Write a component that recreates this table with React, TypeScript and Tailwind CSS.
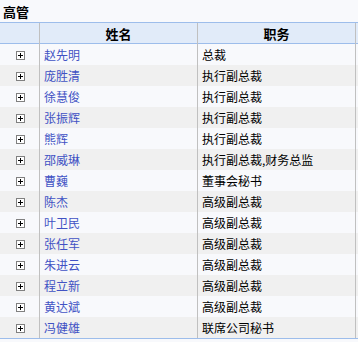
import React from 'react';

const rows: [string, string][] = [
  ['赵先明', '总裁'],
  ['庞胜清', '执行副总裁'],
  ['徐慧俊', '执行副总裁'],
  ['张振辉', '执行副总裁'],
  ['熊辉', '执行副总裁'],
  ['邵威琳', '执行副总裁,财务总监'],
  ['曹巍', '董事会秘书'],
  ['陈杰', '高级副总裁'],
  ['叶卫民', '高级副总裁'],
  ['张任军', '高级副总裁'],
  ['朱进云', '高级副总裁'],
  ['程立新', '高级副总裁'],
  ['黄达斌', '高级副总裁'],
  ['冯健雄', '联席公司秘书'],
];

function PlusBox() {
  return (
    <span className="relative block w-[9px] h-[9px] border border-[#808080] bg-white">
      <span className="absolute left-[1px] top-[3px] w-[5px] h-[1px] bg-black" />
      <span className="absolute left-[3px] top-[1px] w-[1px] h-[5px] bg-black" />
    </span>
  );
}

export default function App() {
  return (
    <div
      className="w-[358px] h-[342px] bg-[#f8f9fc] text-[12px] text-black overflow-hidden"
      style={{ fontFamily: '"Noto Sans CJK SC", "Liberation Sans", sans-serif' }}
    >
      <div className="h-[22px] pl-[3px] pt-[4px] text-[13px] font-bold leading-[16px]">高管</div>

      <div className="border-y border-[#9dbdeb]">
        {/* header */}
        <div className="grid grid-cols-[40px_158px_158px_2px] h-[21px] bg-[#e1ebf9] border-b border-[#9dbdeb] font-bold text-[13px] leading-[21px]">
          <div className="border-r border-[#c0c0c0]" />
          <div className="border-r border-[#c0c0c0] text-center">姓名</div>
          <div className="border-r border-[#c0c0c0] text-center">职务</div>
          <div />
        </div>

        {rows.map(([name, title], i) => (
          <div
            key={name}
            className={
              'grid grid-cols-[40px_158px_158px_2px] h-[21px] leading-[21px] ' +
              (i % 2 === 0 ? 'bg-[#f8f9fc]' : 'bg-[#f0f0f0]')
            }
          >
            <div className="border-r border-[#c0c0c0] flex items-center pl-[16px] pt-[1px]">
              <PlusBox />
            </div>
            <div className="border-r border-[#c0c0c0] pl-[4px] text-[#4152c4] whitespace-nowrap">{name}</div>
            <div className="border-r border-[#c0c0c0] pl-[4px] whitespace-nowrap">{title}</div>
            <div />
          </div>
        ))}
      </div>
    </div>
  );
}
